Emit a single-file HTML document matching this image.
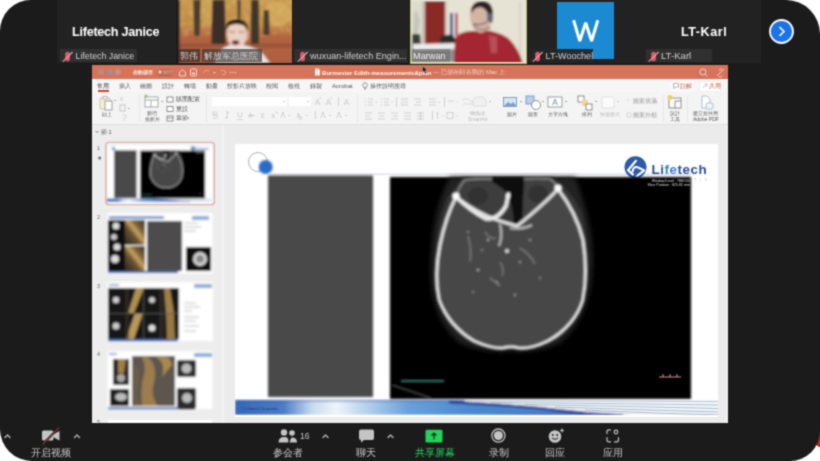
<!DOCTYPE html>
<html><head><meta charset="utf-8">
<style>
*{margin:0;padding:0;box-sizing:border-box}
html,body{width:820px;height:461px;overflow:hidden;background:#fff;font-family:"Liberation Sans",sans-serif}
.a{position:absolute}
#frame{position:absolute;left:0;top:0;width:820px;height:461px;background:#1b1b1b;border-radius:31px 34px 30px 32px;overflow:hidden;filter:url(#gblur)}
.tile{position:absolute;top:0;height:63px;background:#222;overflow:hidden}
.lbl{position:absolute;top:49px;height:13px;background:rgba(50,50,50,.9);color:#d0d0d0;font-size:9.5px;line-height:14.6px;white-space:nowrap}
.big{position:absolute;color:#fff;font-weight:bold;font-size:12.6px;white-space:nowrap}
.mic{position:absolute;left:1.5px;top:0.5px;width:12px;height:12px}
/* ppt */
#ppt{position:absolute;left:92px;top:65px;width:636px;height:358px;background:#f3f2f2;overflow:hidden}
#tb{position:absolute;left:0;top:0;width:636px;height:14px;background:#d5745a}
#tabs{position:absolute;left:0;top:14px;width:636px;height:13px;background:#f7f6f6}
#rib{position:absolute;left:0;top:27px;width:636px;height:33px;background:#f5f4f4;border-bottom:1px solid #e2e1e1}
.t{position:absolute;font-size:6px;color:#555;white-space:nowrap;line-height:7px}
.tg{position:absolute;font-size:5.5px;color:#bbb;white-space:nowrap;line-height:7px}
.sep{position:absolute;width:1px;background:#dedede}
/* toolbar */
.tl{position:absolute;top:447px;font-size:10px;color:#c8c8c8;white-space:nowrap;line-height:11px}
.car{position:absolute;top:432px;width:8px;height:6px}
</style></head><body><svg width="0" height="0" style="position:absolute"><filter id="gblur" x="0" y="0" width="100%" height="100%" color-interpolation-filters="sRGB"><feConvolveMatrix order="3" kernelMatrix="1 3 1 3 9 3 1 3 1" divisor="25" edgeMode="duplicate"/></filter></svg>
<div class="a" style="left:814px;top:429px;width:12px;height:18px;border-radius:50%;background:#c8262a"></div>
<div id="frame">
  <!-- tile 1 -->
  <div class="tile" style="left:57px;width:119px">
    <div class="big" style="left:15px;top:25px;letter-spacing:-.25px">Lifetech Janice</div>
    <div class="lbl" style="left:2.5px;width:77px"><svg class="mic" viewBox="0 0 12 12"><rect x="4.2" y="1.8" width="4.8" height="9.6" rx="2.4" fill="#d85a6a"/><path d="M1.8 11.6L11.6 2" stroke="#eaa4ac" stroke-width="1.1"/></svg><span style="position:absolute;left:16px;font-size:8.8px">Lifetech Janice</span></div>
  </div>
  <!-- tile 2 video -->
  <div class="tile" style="left:177.5px;width:114.5px;background:#b8743c">
    <svg class="a" style="left:0;top:0" width="115" height="63" viewBox="0 0 115 63">
      <defs>
        <linearGradient id="fg" x1="0" y1="0" x2="0" y2="1"><stop offset="0" stop-color="#c89a50"/><stop offset=".4" stop-color="#c08a46"/><stop offset=".58" stop-color="#b46a40"/><stop offset="1" stop-color="#a85a3c"/></linearGradient>
        <filter id="b1" x="-10%" y="-10%" width="120%" height="120%"><feGaussianBlur stdDeviation="1"/></filter>
        <filter id="b1n" x="0" y="0" width="100%" height="100%"><feTurbulence type="fractalNoise" baseFrequency=".18" numOctaves="2" seed="5"/><feColorMatrix values="0 0 0 0 .85  0 0 0 0 .68  0 0 0 0 .35  0 0 0 -2 1.1"/><feGaussianBlur stdDeviation=".8"/></filter>
      </defs>
      <rect width="115" height="63" fill="url(#fg)"/>
      <rect width="115" height="38" filter="url(#b1n)" opacity=".45"/>
      <g filter="url(#b1)">
        <ellipse cx="100" cy="14" rx="14" ry="12" fill="#dcb868" opacity=".55"/>
        <ellipse cx="30" cy="10" rx="8" ry="14" fill="#d4b060" opacity=".4"/>
        <rect x="0" y="36" width="115" height="27" fill="#b06040" opacity=".6"/>
        <rect x="0" y="43" width="115" height="5" fill="#8a4a36" opacity=".5"/>
        <rect x="-2" y="0" width="3.5" height="63" fill="#2a221e"/>
        <path d="M15.5 0h7l-1 36h-5z" fill="#4a3a2e"/>
        <path d="M34.5 0h12l1 44h-14z" fill="#3a2e28"/>
        <path d="M59.5 0h3l-.5 24h-2z" fill="#4a3a30"/>
        <path d="M73.5 0h7l.5 44h-8z" fill="#3a342a"/>
        <path d="M86 10h5l.5 25h-6z" fill="#4a3a2e"/>
        <path d="M37 63 Q40 48 52 45 L66 45 Q80 48 86 55 L92 63z" fill="#e6e4e2"/>
        <path d="M49 35 Q48 24 58.5 23.5 Q69 24 69 35 Q69 46 58.5 48 Q49 46 49 35z" fill="#ecd0c4"/>
        <path d="M47.5 31 Q47 20 58.5 20 Q70 20 70 31 L68.5 28 Q66 24 58.5 24 Q51 24 49 28z" fill="#161210"/>
        <rect x="68" y="31" width="2.5" height="9" rx="1.2" fill="#dcb4a4"/>
        <path d="M51 32h6M60.5 32h6" stroke="#7a6058" stroke-width=".9"/>
        <ellipse cx="57.5" cy="42.5" rx="3.8" ry="2.2" fill="#5a2a2a"/>
      </g>
    </svg>
    <div class="lbl" style="left:0;width:22px;background:rgba(50,42,38,.7);font-size:9px;padding-left:2.5px">郭伟</div>
    <div class="lbl" style="left:24.5px;width:59.5px;background:rgba(60,56,54,.7);font-size:9px;padding-left:2px">解放军总医院</div>
  </div>
  <!-- tile 3 -->
  <div class="tile" style="left:293px;width:116px">
    <div class="lbl" style="left:1px;width:113px"><svg class="mic" viewBox="0 0 12 12"><rect x="4.2" y="1.8" width="4.8" height="9.6" rx="2.4" fill="#d85a6a"/><path d="M1.8 11.6L11.6 2" stroke="#eaa4ac" stroke-width="1.1"/></svg><span style="position:absolute;left:16px;font-size:9.1px">wuxuan-lifetech Engin...</span></div>
  </div>
  <!-- tile 4 Marwan -->
  <div class="tile" style="left:410px;top:-1px;height:65px;width:117px;background:#e6e2d6;border:1px solid #b4c060">
    <svg class="a" style="left:0;top:1px" width="115" height="61" viewBox="0 0 115 61">
      <defs><filter id="b2"><feGaussianBlur stdDeviation="1"/></filter></defs>
      <g filter="url(#b2)">
        <rect x="-2" y="-2" width="119" height="65" fill="#e6e2d4"/>
        <rect x="0" y="0" width="12" height="61" fill="#dedcd0"/>
        <rect x="11" y="0" width="3" height="45" fill="#c8c0b0"/>
        <rect x="14" y="0" width="20" height="45" fill="#8a2a28"/>
        <rect x="34" y="0" width="2" height="45" fill="#d0c8b8"/>
        <rect x="108" y="0" width="2" height="61" fill="#d8d4c4"/>
        <path d="M3 12 L6 10 L9 20 L5 40 L2 38z" fill="#b8bcb0" opacity=".7"/>
        <rect x="39" y="12" width="3" height="23" fill="#3a4a8a"/>
        <rect x="42" y="12" width="3" height="23" fill="#e8e8e8"/>
        <rect x="44" y="12" width="2.5" height="23" fill="#b03030"/>
        <path d="M29 36 Q34 33 42 34 L46 42 L44 46 L29 46z" fill="#2a2a2a"/>
        <path d="M1 33 L9 33 L10 45 L1 45z" fill="#3a3a3a"/>
        <path d="M0 43 L46 43 L46 61 L0 61z" fill="#8e8e8e"/>
        <path d="M2 43 L44 42 L46 48 L2 49z" fill="#ececec"/>
        <path d="M43 63 L44 37 Q48 31 60 30 L80 30 Q92 33 98 38 Q108 48 112 63z" fill="#a42832"/>
        <path d="M78 34 L86 36 L86 52 L80 52z" fill="#c06068" opacity=".7"/>
        <path d="M59 15 Q59 1 70 .5 Q81 1 81 15 Q80 30 70 32 Q60 30 59 15z" fill="#d4b4a4"/>
        <path d="M64 22 Q70 32 78 24 L80 28 Q72 34 62 26z" fill="#a89088" opacity=".8"/>
        <path d="M60 10 Q61 0 71 0 Q82 0 82 14 L81 22 L77 20 Q78 8 70 6 Q63 6 61 12z" fill="#2a2420"/>
        <rect x="76" y="12" width="6" height="8" rx="3" fill="#5a6a7a"/>
        <path d="M77 20 Q72 25 62 23" stroke="#333" stroke-width="1" fill="none"/>
      </g>
    </svg>
    <div class="lbl" style="left:1px;top:49px;width:38px;background:rgba(100,100,100,.5);color:#f2f2f2;font-size:9.2px;padding-left:1px">Marwan</div>
  </div>
  <!-- tile 5 -->
  <div class="tile" style="left:527px;width:118px">
    <div class="a" style="left:30px;top:2px;width:57px;height:57px;background:#1b8ad3"></div>
    <svg class="a" style="left:30px;top:2px" width="57" height="57" viewBox="557 2 57 57"><path d="M573.6 20.2L579.8 41L585.7 22.8L591.6 41L597.8 20.2" fill="none" stroke="#fff" stroke-width="3" stroke-linejoin="miter" stroke-miterlimit="3"/></svg>
    <div class="lbl" style="left:2px;width:64px;background:rgba(38,38,38,.95)"><svg class="mic" viewBox="0 0 12 12"><rect x="4.2" y="1.8" width="4.8" height="9.6" rx="2.4" fill="#d85a6a"/><path d="M1.8 11.6L11.6 2" stroke="#eaa4ac" stroke-width="1.1"/></svg><span style="position:absolute;left:16.5px;font-size:9.1px">LT-Woochel</span></div>
  </div>
  <!-- tile 6 -->
  <div class="tile" style="left:645px;width:115.5px">
    <div class="big" style="left:36px;top:24.5px;letter-spacing:.55px">LT-Karl</div>
    <div class="lbl" style="left:0.5px;width:66px"><svg class="mic" viewBox="0 0 12 12"><rect x="4.2" y="1.8" width="4.8" height="9.6" rx="2.4" fill="#d85a6a"/><path d="M1.8 11.6L11.6 2" stroke="#eaa4ac" stroke-width="1.1"/></svg><span style="position:absolute;left:15.5px;font-size:9.6px">LT-Karl</span></div>
  </div>
  <!-- next arrow -->
  <svg class="a" style="left:769px;top:19px" width="25" height="25" viewBox="0 0 25 25">
    <circle cx="12.5" cy="12.5" r="11.5" fill="#1a73e8" stroke="#fff" stroke-width="1.8"/>
    <path d="M10.5 8L15 12.5L10.5 17" stroke="#fff" stroke-width="1.6" fill="none"/>
  </svg>

  <!-- PPT -->
  <div id="ppt">
    <div id="tb">
      <div class="a" style="left:6px;top:4px;width:6px;height:6px;border-radius:50%;background:#b98a80"></div>
      <div class="a" style="left:15px;top:4px;width:6px;height:6px;border-radius:50%;background:#a98a94"></div>
      <div class="a" style="left:23px;top:4px;width:6px;height:6px;border-radius:50%;background:#c49282"></div>
      <div class="t" style="left:41px;top:3.5px;color:#fbe8e0;font-weight:bold;font-size:4.8px">自動儲存</div>
      <div class="a" style="left:64.5px;top:3.5px;width:16.5px;height:7px;border-radius:4px;background:#b86450"></div>
      <div class="a" style="left:66px;top:5px;width:4px;height:4px;border-radius:50%;background:#e8b8a8"></div>
      <div class="t" style="left:71px;top:3.5px;color:#e0a898;font-size:4.5px">關閉</div>
      <svg class="a" style="left:86px;top:2px" width="60" height="11" viewBox="0 0 60 11">
        <path d="M1.5 5.5L4.5 2.5L7.5 5.5V9H1.5z" stroke="#f5d8cc" stroke-width="1" fill="none"/>
        <rect x="12.5" y="2" width="6" height="7" rx="1" stroke="#f5d8cc" stroke-width="1" fill="none"/>
        <rect x="14" y="5.5" width="3" height="2" fill="#f5d8cc"/>
        <path d="M25 6Q27 2 31 4" stroke="#e8a898" stroke-width="1" fill="none"/>
        <path d="M35 5l1.5 1.5L38 5" fill="#f5d8cc"/>
        <path d="M43 4Q46 2 48 5Q48 8 44 8" stroke="#e8a898" stroke-width="1" fill="none"/>
        <circle cx="55" cy="5.5" r=".7" fill="#f5d8cc"/><circle cx="57.5" cy="5.5" r=".7" fill="#f5d8cc"/><circle cx="52.5" cy="5.5" r=".7" fill="#f5d8cc"/>
      </svg>
      <svg class="a" style="left:222px;top:3px" width="7" height="8" viewBox="0 0 7 8"><path d="M1 .5h3.5L6 2v5.5H1z" fill="#fbe8e0"/></svg>
      <div class="t" style="left:230px;top:3.5px;color:#fff3ee;font-weight:bold;font-size:6.1px">Burmester Edith-measurements&amp;plan</div>
      <div class="t" style="left:341px;top:3.5px;color:#f6d0c4;font-size:6px">— 已儲存到 在我的 Mac 上</div>
      <svg class="a" style="left:606px;top:2px" width="30" height="11" viewBox="0 0 30 11">
        <circle cx="5" cy="5" r="3" stroke="#f5d0c4" stroke-width="1" fill="none"/><path d="M7.2 7.2L9.5 9.5" stroke="#f5d0c4" stroke-width="1"/>
        <path d="M19 9L26 2M21 3.5a2 2 0 0 1 3-1M24 8.5a2 2 0 0 1-3 1" stroke="#f5d0c4" stroke-width="1" fill="none"/>
      </svg>
    </div>
    <div id="tabs">
      <div class="t" style="left:5px;top:3.8px;color:#333;font-size:6px">常用</div>
      <div class="a" style="left:5.5px;top:11px;width:11px;height:1.5px;background:#c8462a"></div>
      <div class="t" style="left:27px;top:3.8px">插入</div>
      <div class="t" style="left:48px;top:3.8px">繪圖</div>
      <div class="t" style="left:70px;top:3.8px">設計</div>
      <div class="t" style="left:92px;top:3.8px">轉場</div>
      <div class="t" style="left:114px;top:3.8px">動畫</div>
      <div class="t" style="left:135px;top:3.8px">投影片放映</div>
      <div class="t" style="left:174px;top:3.8px">校閱</div>
      <div class="t" style="left:196px;top:3.8px">檢視</div>
      <div class="t" style="left:218px;top:3.8px">錄製</div>
      <div class="t" style="left:240px;top:3.8px;font-size:6px">Acrobat</div>
      <svg class="a" style="left:270px;top:2.5px" width="6" height="8" viewBox="0 0 6 8"><path d="M3 .8a2.2 2.2 0 0 1 1.3 4L4 6H2L1.7 4.8A2.2 2.2 0 0 1 3 .8zM2 7h2" stroke="#777" stroke-width=".8" fill="none"/></svg>
      <div class="t" style="left:278px;top:3.8px">操作說明搜尋</div>
      <div class="a" style="left:578px;top:2.5px;width:23px;height:10px;background:#fbfafa"></div>
      <svg class="a" style="left:581px;top:4px" width="6" height="6" viewBox="0 0 6 6"><path d="M.5.5h5v3.5H2.5L1 5.5V4H.5z" stroke="#999" stroke-width=".7" fill="none"/></svg>
      <div class="t" style="left:588px;top:3.8px;color:#c8553a;font-size:5.6px">註解</div>
      <div class="a" style="left:607px;top:2px;width:22px;height:11px;background:#fff;border:1px solid #eee"></div>
      <svg class="a" style="left:610px;top:4px" width="6" height="6" viewBox="0 0 6 6"><path d="M1 5L5 1M2.5 1H5V3.5" stroke="#aaa" stroke-width=".7" fill="none"/></svg>
      <div class="t" style="left:617px;top:3.8px;color:#c8553a;font-size:5.6px">共用</div>
    </div>
    <div id="rib">
      <svg class="a" style="left:0;top:0" width="636" height="32" viewBox="0 0 636 32">
        <g fill="none" stroke-width=".8">
        <!-- paste -->
        <rect x="8" y="6" width="10" height="11" rx="1" fill="#f2f0dc" stroke="#c0bc98"/>
        <rect x="11" y="4.5" width="4" height="2.5" fill="#fff" stroke="#aaa"/>
        <rect x="13" y="9" width="7" height="9" fill="#fff" stroke="#888"/>
        <path d="M22 8l1.2 1.2L24.4 8" fill="#888" stroke="none"/>
        <path d="M28 5l3 4M31 5l-3 4" stroke="#ccc"/>
        <rect x="28" y="13" width="5" height="6" stroke="#bbb"/>
        <path d="M35.5 16l1.2 1.2L38 16" fill="#999" stroke="none"/>
        <path d="M30 23h4v3h-2v3" stroke="#d4d4d4"/>
        <!-- new slide -->
        <rect x="53" y="5" width="13" height="10" fill="#fff" stroke="#8a9a9a"/>
        <path d="M53 8h13M59 8v7" stroke="#8a9a9a"/>
        <path d="M54 2v4M52 4h4" stroke="#8bb06a"/>
        <path d="M69 9l1.2 1.2L71.4 9" fill="#888" stroke="none"/>
        <rect x="75" y="5" width="6" height="5" fill="#fff" stroke="#777"/>
        <rect x="75" y="14.5" width="6" height="5" fill="#fff" stroke="#777"/>
        <rect x="75" y="24" width="6" height="5" fill="#fff" stroke="#777"/>
        <path d="M75 26h6" stroke="#777"/>
        <path d="M103 7.5l1.2 1.2L105.4 7.5" fill="#888" stroke="none"/>
        <path d="M95 25.5l1.2 1.2L97.4 25.5" fill="#888" stroke="none"/>
        <!-- separators -->
        <path d="M47.5 3v27M114.5 3v27M265.5 3v27M571.5 3v27M595.5 3v27" stroke="#e4e3e3"/>
        <!-- font boxes -->
        <rect x="120" y="5" width="75" height="9" fill="#fff" stroke="none"/>
        <rect x="197" y="5" width="22" height="9" fill="#fff" stroke="none"/>
        <path d="M191 9l1 1 1-1M215 9l1 1 1-1" stroke="#bbb"/>
        <g stroke="#c8c8c8">
        <path d="M223 13l2.5-6 2.5 6M224 11h3M227 6.5l1-1 1 1"/>
        <path d="M234 13l2.5-6 2.5 6M235 11h3M238 6.5l1-1 1 1"/>
        <path d="M246.5 5v9"/>
        <path d="M252 13l2.5-6 2.5 6M253 11h3"/>
        <path d="M121 20h2.5a1.5 1.5 0 0 1 0 3H121v-3zM121 23h3a1.5 1.5 0 0 1 0 3h-3" />
        <path d="M136 20l-1.5 6M134 20h3M133 26h3"/>
        <path d="M146 20v3a2 2 0 0 0 4 0v-3M145.5 27.5h5"/>
        <path d="M157 26l1.5-5 1.5 5M156 23.5h7"/>
        <path d="M169 21l3 5M172 21l-3 5"/>
        <path d="M180 22l2.5 4M182.5 22l-2.5 4M183.5 20h1.5v1.5"/>
        <path d="M189 26l2-6 2 6M196 23l1 1 1-1"/>
        <path d="M205 26l1.5-5 1.5 5M210 26a1.5 1.5 0 1 1 0-.1M213.5 23l1 1 1-1"/>
        <path d="M223.5 19v8"/>
        <path d="M229 26l2-6 2 6M237 23l1 1 1-1"/>
        <path d="M245 26l2-6 2 6M253 23l1 1 1-1"/>
        <!-- paragraph -->
        <path d="M273 7h1M276 7h5M273 10h1M276 10h5M273 13h1M276 13h5M283 9.5l1 1 1-1"/>
        <path d="M289 7h1M292 7h5M289 10h1M292 10h5M289 13h1M292 13h5M299 9.5l1 1 1-1"/>
        <path d="M304.5 5v10"/>
        <path d="M309 7h7M311 10h5M309 13h7M309 9l1.5 1.5L309 12"/>
        <path d="M322 7h7M324 10h5M322 13h7"/>
        <path d="M337 7h7M337 10h7M337 13h7M346 9.5l1 1 1-1"/>
        <path d="M352.5 5v10"/>
        <path d="M356 9h6M364 9.5l1 1 1-1"/>
        <path d="M370 8q4-3 8 1q3 2 6 0M371 12h10" stroke="#d4d4d4"/>
        <path d="M388 9.5l1 1 1-1"/>
        <path d="M273 21h7M273 24h5M273 27h7"/>
        <path d="M286 21h7M287 24h5M286 27h7"/>
        <path d="M299 21h7M301 24h5M299 27h7"/>
        <path d="M312 21h7M312 24h7M312 27h7"/>
        <path d="M325 21h7M325 24h7M325 27h7M328.5 20v8"/>
        <path d="M340.5 19v9"/>
        <path d="M344 21h3M345.5 21v6M350 23.5l1 1 1-1"/>
        <rect x="355" y="20.5" width="6" height="6"/><path d="M364 23.5l1 1 1-1"/>
        </g>
        <!-- SmartArt -->
        <path d="M381 8l3-3h7l3 3v6h-13z" stroke="#d8d8d8" fill="#f0f0f0"/>
        <path d="M397 9l1 1 1-1" stroke="#aaa"/>
        <!-- picture -->
        <rect x="411.5" y="5.5" width="13" height="9" fill="#d8e6f4" stroke="#6a8ab0"/>
        <path d="M412 14l4-4 3 2 2-2 3.5 4z" fill="#7aa2cc" stroke="none"/>
        <path d="M428 9l1 1 1-1" stroke="#888"/>
        <!-- shapes -->
        <rect x="434" y="4" width="8" height="8" fill="#b8d0ec" stroke="#6a8ab0"/>
        <circle cx="444" cy="13" r="4.5" fill="#fff" stroke="#777"/>
        <path d="M450 9l1 1 1-1" stroke="#888"/>
        <!-- text box -->
        <rect x="456" y="5" width="14" height="10" fill="#fff" stroke="#7a8a90"/>
        <path d="M460.5 13l2.5-6 2.5 6M461.5 11h3" stroke="#6a8ab0"/>
        <path d="M473 9l1 1 1-1" stroke="#888"/>
        <!-- arrange -->
        <rect x="486" y="4" width="6" height="6" fill="#fff" stroke="#777"/>
        <rect x="490" y="8" width="6" height="6" fill="#f2d890" stroke="none"/>
        <rect x="494" y="12" width="6" height="6" fill="#fff" stroke="#777"/>
        <path d="M503 9l1 1 1-1" stroke="#888"/>
        <!-- quick styles -->
        <path d="M510 5h10l2 2v9h-12z" fill="#fbfbfb" stroke="#dcdcdc"/>
        <path d="M525 9l1 1 1-1" stroke="#bbb"/>
        <path d="M535 7l2 2M535 21h4v4h-4z" stroke="#d0d0d0"/>
        <path d="M563 9l1 1 1-1M563 23l1 1 1-1" stroke="#bbb"/>
        <!-- designer -->
        <rect x="577" y="6" width="12" height="10" fill="#fbfbfb" stroke="#777"/>
        <path d="M583 9v7M583 9h6" stroke="#777"/>
        <circle cx="578" cy="5.5" r="2.5" fill="#f0d060" stroke="none"/>
        <!-- adobe pdf -->
        <path d="M610 4h5l3 3v9h-8z" fill="#fff" stroke="#9ab0c8"/>
        <rect x="614" y="11" width="7" height="6" rx="1.5" fill="#eef4fa" stroke="#9ab0c8"/>
        </g>
      </svg>
      <div class="t" style="left:10px;top:19px;font-size:5px">貼上</div>
      <div class="t" style="left:55px;top:18px;font-size:5px">新增</div>
      <div class="t" style="left:53px;top:24px;font-size:5px">投影片</div>
      <div class="t" style="left:84px;top:4px;font-size:5.5px">版面配置</div>
      <div class="t" style="left:84px;top:13.5px;font-size:5.5px">重設</div>
      <div class="t" style="left:84px;top:23px;font-size:5.5px">章節</div>
      <div class="tg" style="left:378px;top:18px;font-size:5px">轉換成</div>
      <div class="tg" style="left:376px;top:24px;font-size:5px">SmartArt</div>
      <div class="t" style="left:415px;top:19px;font-size:5px">圖片</div>
      <div class="t" style="left:436px;top:19px;font-size:5px">圖形</div>
      <div class="t" style="left:456px;top:19px;font-size:5px">文字方塊</div>
      <div class="t" style="left:490px;top:19px;font-size:5px">排列</div>
      <div class="tg" style="left:508px;top:19px;font-size:5px">快速樣式</div>
      <div class="tg" style="left:541px;top:5.5px;font-size:5.5px;color:#999">圖案填滿</div>
      <div class="tg" style="left:541px;top:19.5px;font-size:5.5px;color:#999">圖案外框</div>
      <div class="t" style="left:578px;top:18px;font-size:5px">設計</div>
      <div class="t" style="left:578px;top:24px;font-size:5px">工具</div>
      <div class="t" style="left:601px;top:18px;font-size:5px">建立並共用</div>
      <div class="t" style="left:601px;top:24px;font-size:5px">Adobe PDF</div>
    </div>
    <div id="thumbs" class="a" style="left:0;top:60px;width:130px;height:298px;background:#ededed">
      <svg class="a" style="left:0;top:0" width="130" height="298" viewBox="0 0 130 298">
        <defs>
          <filter id="tb1" x="-10%" y="-10%" width="120%" height="120%"><feGaussianBlur stdDeviation="1"/></filter>
          <linearGradient id="gold" x1="0" y1="1" x2="1" y2="0"><stop offset="0" stop-color="#2a2420"/><stop offset=".4" stop-color="#6a5434"/><stop offset=".55" stop-color="#c8a460"/><stop offset=".7" stop-color="#7a6038"/><stop offset="1" stop-color="#3a3028"/></linearGradient>
        </defs>
        <path d="M3.5 6l1.5 1.5L6.5 6" stroke="#666" stroke-width=".8" fill="none"/>
        <text x="9" y="9" font-size="5.5" fill="#555">節 1</text>
        <text x="5" y="25" font-size="5.5" fill="#666">1</text>
        <text x="4.5" y="35" font-size="6" fill="#666">★</text>
        <!-- thumb 1 -->
        <g filter="url(#tb1)">
          <rect x="16" y="20" width="104" height="59" fill="#fff"/>
          <g transform="translate(14.9,18.6) scale(.2153)"><use href="#slideg"/></g>
        </g>
        <rect x="13.8" y="17.2" width="108.6" height="62.6" rx="3" fill="none" stroke="#daa69a" stroke-width="1.1"/>
        <!-- thumb 2 -->
        <text x="5" y="94" font-size="5.5" fill="#666">2</text>
        <g filter="url(#tb1)">
          <rect x="15.5" y="88" width="105" height="60.5" fill="#fff"/>
          <rect x="17" y="91" width="55" height="3" fill="#7a9ad0"/>
          <rect x="100" y="91" width="17" height="4" fill="#8aaad8"/>
          <rect x="16" y="95" width="17" height="51" fill="#111"/>
          <circle cx="24" cy="101" r="3.5" fill="#ddd"/><circle cx="22" cy="112" r="3" fill="#ccc"/>
          <circle cx="25" cy="122" r="3.5" fill="#ddd"/><circle cx="23" cy="134" r="4" fill="#ddd"/>
          <rect x="33" y="95" width="20" height="25" fill="url(#gold)"/>
          <rect x="33" y="121" width="20" height="25" fill="url(#gold)"/>
          <rect x="55" y="96" width="35" height="50" fill="#4e4c4c"/>
          <path d="M92 98h14M92 102h17M92 106h12" stroke="#bbb" stroke-width="1"/>
          <rect x="94" y="122" width="25" height="24" fill="#111"/>
          <circle cx="108" cy="134" r="7" fill="#d8d8d8"/><circle cx="108" cy="134" r="4" fill="#888"/>
          <path d="M16 146h70v2H16z" fill="#4a6ab0"/>
        </g>
        <!-- thumb 3 -->
        <text x="5" y="163" font-size="5.5" fill="#666">3</text>
        <g filter="url(#tb1)">
          <rect x="15" y="157" width="106" height="59" fill="#fff"/>
          <rect x="17" y="159" width="10" height="2" fill="#8aaad8"/>
          <rect x="102" y="159" width="18" height="4" fill="#8aaad8"/>
          <rect x="16" y="163" width="71" height="51" fill="#161616"/>
          <path d="M36 188L44 163L52 163L42 188z" fill="#b09050"/>
          <path d="M34 214L43 188L51 188L42 214z" fill="#b89858"/>
          <path d="M72 163h6l4 25h-8z" fill="#a08048"/><path d="M74 188h8l1 26h-8z" fill="#987844"/>
          <rect x="33" y="163" width="4" height="51" fill="#3a3028" opacity=".6"/>
          <rect x="67" y="163" width="5" height="51" fill="#3a3028" opacity=".6"/>
          <circle cx="24" cy="175" r="3.2" fill="#d0d0d0"/><circle cx="60" cy="175" r="3" fill="#ccc"/>
          <circle cx="24" cy="201" r="3.5" fill="#ccc"/><circle cx="60" cy="203" r="3.5" fill="#ddd"/>
          <path d="M16 188.5h71M51.5 163v51" stroke="#555" stroke-width=".8"/>
          <path d="M92 178h12M92 182h16M92 186h8M92 192h15M92 196h12M92 201h15M92 206h12" stroke="#bbb" stroke-width="1"/>
          <path d="M16 214h70v2H16z" fill="#4a6ab0"/>
        </g>
        <!-- thumb 4 -->
        <text x="5" y="231" font-size="5.5" fill="#666">4</text>
        <g filter="url(#tb1)">
          <rect x="15.5" y="226" width="105" height="58" fill="#fff"/>
          <rect x="17" y="228" width="8" height="2" fill="#8aaad8"/>
          <rect x="102" y="228" width="18" height="4" fill="#8aaad8"/>
          <rect x="21" y="234" width="16" height="26" fill="#2a2420"/>
          <path d="M26 234h8l-2 14h-6z" fill="#a08048"/>
          <circle cx="29" cy="253" r="4" fill="#aaa"/>
          <rect x="18" y="264" width="19" height="17" fill="#1e1e1e"/>
          <ellipse cx="29" cy="272" rx="6" ry="4" fill="#bbb"/>
          <rect x="40" y="231" width="43" height="50" fill="#5c5650"/>
          <path d="M56 232Q66 240 62 258Q58 270 66 281H50Q48 262 52 250Q54 240 50 232z" fill="#a8844c" opacity=".85"/><path d="M44 240Q50 250 46 262Q44 272 48 281H42V240z" fill="#7a6040" opacity=".6"/>
          <path d="M64 232Q74 238 70 252L80 240Q78 232 74 232z" fill="#b8904c" opacity=".85"/>
          <rect x="85" y="235" width="19" height="17" rx="2" fill="#2a2a2a"/>
          <circle cx="94.5" cy="243.5" r="5" fill="#bbb"/>
          <rect x="85" y="263" width="19" height="21" rx="2" fill="#2a2a2a"/>
          <circle cx="95" cy="273" r="5" fill="#bbb"/>
          <path d="M16 282h70v2H16z" fill="#4a6ab0"/>
        </g>
        <text x="5" y="299" font-size="5.5" fill="#666">5</text>
        <rect x="16" y="295" width="104" height="5" fill="#fff"/>
      </svg>
    </div>
    <div class="a" style="left:130px;top:60px;width:2px;height:298px;background:#f3f3f3"></div>
    <div id="edit" class="a" style="left:132px;top:60px;width:504px;height:298px;background:#ebebeb"></div>
    <div class="a" style="left:634px;top:60px;width:2px;height:298px;background:#f2f2f2"></div>
    <div id="slide" class="a" style="left:143px;top:79px;width:483px;height:273px;background:#fff;overflow:hidden">
      <svg class="a" style="left:0;top:0" width="483" height="273" viewBox="0 0 483 273"><g id="slideg">
        <defs>
          <filter id="sb" x="-5%" y="-5%" width="110%" height="110%"><feGaussianBlur stdDeviation=".8"/></filter>
          <filter id="sk" x="-20%" y="-20%" width="140%" height="140%"><feGaussianBlur stdDeviation="1.2"/></filter>
          <filter id="sk2" x="-50%" y="-50%" width="200%" height="200%"><feGaussianBlur stdDeviation="2.5"/></filter>
          <linearGradient id="band" x1="0" y1="0" x2="0" y2="1"><stop offset="0" stop-color="#1c3a9a"/><stop offset=".25" stop-color="#3a6ac0"/><stop offset=".6" stop-color="#5a9ad8"/><stop offset="1" stop-color="#3a7ac8"/></linearGradient>
          <radialGradient id="glow" cx=".5" cy=".5" r=".5"><stop offset="0" stop-color="#fff" stop-opacity="1"/><stop offset=".6" stop-color="#fff" stop-opacity=".7"/><stop offset="1" stop-color="#fff" stop-opacity="0"/></radialGradient>
        </defs>
        <!-- circle decoration -->
        <circle cx="23" cy="18" r="9.5" fill="none" stroke="#9a9a9a" stroke-width=".8"/>
        <circle cx="30.7" cy="23" r="7" fill="#2a6ac8" filter="url(#sb)"/>
        <rect x="33" y="29.5" width="423" height="1.2" fill="#d6dbe6"/>
        <!-- gray panel -->
        <rect x="33" y="31.5" width="105" height="221.5" fill="#4a4849" filter="url(#sb)"/>
        <g transform="translate(-235,-144)"><circle cx="635.5" cy="167.3" r="11" fill="#2c5aa6"/>
        <path d="M636 160.8L628 170.2L633 174.6M632.6 171.4Q633.2 166.2 637.6 167.2L644.2 170.4L636.6 176.4" fill="none" stroke="#fff" stroke-width="2.1" stroke-linejoin="round" stroke-linecap="round"/></g>
        <!-- CT black -->
        <rect x="155" y="33" width="301" height="222" fill="#000" filter="url(#sb)"/>
        <g transform="translate(-235,-144)">
        <g filter="url(#sk2)">
          <path d="M450 177 L575 177 Q596 230 592 275 Q588 320 560 343 Q535 354 511 351 Q485 354 460 343 Q432 320 431 275 Q430 215 450 177z" fill="#242424"/>
        </g>
        <g filter="url(#sk)">
          <path d="M463 177 L552 177 Q574 192 582 214 Q590 250 588 280 Q584 316 558 338 Q535 352 511 348 Q485 352 464 338 Q436 316 434 280 Q434 230 448 197z" fill="#363636"/>
          <path d="M456 197 Q446 216 440 245 Q434 275 439 300 Q449 326 474 341 Q494 350 504 348 Q511 346 518 348 Q530 350 548 341 Q575 326 583 300 Q588 272 583 240 Q576 212 558 189 Q544 204 517 226 L500 221 Q478 214 456 197z" fill="#474747" stroke="#e2e2e2" stroke-width="3"/>
          <path d="M462 179 L494 179 L507 194 L507 206 L499 218 Q478 211 458 196z" fill="#3e3e3e"/>
          <path d="M524 179 L552 179 L557 189 Q544 204 520 224 L522 214z" fill="#404040"/>
          <ellipse cx="478" cy="196" rx="10" ry="9" fill="#303030"/>
          <ellipse cx="538" cy="194" rx="10" ry="9" fill="#323232"/>
          <path d="M456 197 Q459 186 465 180 Q480 178 494 179M558 189 Q556 183 550 179 Q538 178 524 179" fill="none" stroke="#8c8c8c" stroke-width="1.6"/>
          <path d="M492 177 L524 177 L522 224 L514 224 Q513 206 508 194 Q501 186 492 182z" fill="#0a0a0a"/>
          <path d="M456 197 Q472 212 486 219 Q498 220 506 206 L508.5 194" fill="none" stroke="#ebebeb" stroke-width="3.6" stroke-linecap="round"/>
          <path d="M558 189 Q544 204 517 226" fill="none" stroke="#dedede" stroke-width="3"/>
          <path d="M500 224 Q503 236 499 246" fill="none" stroke="#b8b8b8" stroke-width="2.2"/>
          <path d="M510 228 Q522 230 532 225" fill="none" stroke="#c0c0c0" stroke-width="2"/>
          <circle cx="456" cy="196" r="3.6" fill="#fff"/>
          <circle cx="558" cy="188" r="3.6" fill="#fff"/>
          <circle cx="508" cy="196" r="2.4" fill="#f4f4f4"/>
          <circle cx="507" cy="251" r="2" fill="#e0e0e0"/>
          <circle cx="478" cy="270" r="1.3" fill="#aaa"/><circle cx="520" cy="262" r="1.1" fill="#aaa"/>
          <circle cx="497" cy="282" r="1.1" fill="#999"/><circle cx="515" cy="295" r="1.2" fill="#999"/>
          <circle cx="473" cy="292" r="1" fill="#999"/><circle cx="540" cy="278" r="1" fill="#999"/>
          <circle cx="488" cy="240" r="1.2" fill="#aaa"/><circle cx="530" cy="240" r="1.1" fill="#aaa"/>
          <circle cx="482" cy="250" r="1" fill="#999"/><circle cx="468" cy="232" r="1.1" fill="#999"/>
          <path d="M520 248 Q530 254 535 264M490 278 Q496 282 500 286M468 236 Q472 250 470 262M485 232 Q490 240 496 238M500 262 Q505 270 502 276" fill="none" stroke="#8a8a8a" stroke-width="1.1"/>
        </g>
        </g>
        <text x="455" y="37.5" font-size="3.6" fill="#ddd" text-anchor="end">Window/Level : 788/150</text>
        <text x="455" y="41.5" font-size="3.6" fill="#ddd" text-anchor="end">Slice Position : 825.82 mm</text>
        <rect x="166" y="235.5" width="43" height="3" fill="#2a6856" filter="url(#sb)"/>
        <path d="M157 241 L196 254" stroke="#777" stroke-width="1.2" filter="url(#sb)"/>
        <path d="M424 233h22M428 233v-3M435 233v-3M442 233v-3" stroke="#e8a898" stroke-width=".9"/>
        <!-- logo -->
        <text x="416.5" y="30.4" font-size="13.4" font-weight="bold" fill="#2c4c94" style="letter-spacing:.55px">L<tspan fill="#2c5aa6">i</tspan><tspan fill="#3d80cc">fe</tspan>tech</text>
        <text x="459" y="37" font-size="3.2" fill="#9ab" style="letter-spacing:4px">TIC</text>
        <!-- band -->
        <defs>
          <linearGradient id="bandh" x1="0" y1="0" x2="483" y2="0" gradientUnits="userSpaceOnUse">
            <stop offset="0" stop-color="#3568b8"/><stop offset=".1" stop-color="#4a7cc4"/>
            <stop offset=".16" stop-color="#c8dcf0"/><stop offset=".21" stop-color="#eef4fa"/><stop offset=".27" stop-color="#b8d2ec"/>
            <stop offset=".36" stop-color="#6aa0d8"/><stop offset=".5" stop-color="#4a88cc"/><stop offset=".7" stop-color="#4a80c8"/><stop offset="1" stop-color="#8ab0dc"/>
          </linearGradient>
        </defs>
        <g filter="url(#sb)">
          <path d="M0 256 L483 256 L483 271 L0 271z" fill="url(#bandh)"/>
          <path d="M212 256.6 Q290 261 325 265.5 Q355 269 388 271 L483 271 L483 256 L212 256z" fill="#f2f6fa"/>
          <path d="M0 256.6 L230 256.6" stroke="#2a48a0" stroke-width="1.4" opacity=".8"/>
          <path d="M214 258 Q290 262 325 266.5 Q355 270 388 271.5" fill="none" stroke="#1a2c8c" stroke-width="2.6"/>
          <path d="M250 271 Q320 268 400 271z" fill="#2a4aa8"/>
          </g>
        <g fill="none" stroke-width=".8">
          <path d="M230 257 Q360 257 483 257.5" stroke="#a8b8cc"/>
          <path d="M255 258.5 Q380 259.5 483 261" stroke="#9cb0c8"/>
          <path d="M290 260.5 Q400 262.5 483 264.5" stroke="#98acc4"/>
          <path d="M320 263 Q410 266 483 268" stroke="#94a8c2"/>
          <path d="M350 266 Q420 269.5 483 270.8" stroke="#90a4c0"/>
        </g>
        <rect x="0" y="271" width="483" height="3" fill="#fff"/>
        <text x="6" y="266" font-size="4.2" fill="#1a2a5a" opacity=".8">© Lifetech Scientific</text>
      </g></svg>
    </div>
  </div>

  <svg class="a" style="left:421px;top:64.5px" width="8" height="9" viewBox="0 0 8 9"><path d="M1.5 1L1.5 7.5L3 6L4.5 8.5L5.5 8L4.2 5.5L6.5 5.5z" fill="#111" stroke="#bbb" stroke-width=".5"/></svg>
  <!-- toolbar -->
  <svg class="a" style="left:0;top:423px" width="820" height="38" viewBox="0 423 820 38">
    <g fill="none" stroke="#b8b8b8" stroke-width="1.3" stroke-linecap="round" stroke-linejoin="round">
      <path d="M5 437.5l2.5-2.5 2.5 2.5"/>
      <path d="M74.5 437.5l2.5-2.5 2.5 2.5"/>
      <path d="M323 437.5l2.5-2.5 2.5 2.5"/>
      <path d="M388 437.5l2.5-2.5 2.5 2.5"/>
    </g>
    <!-- video -->
    <rect x="42" y="430.5" width="11.5" height="10" rx="1.5" fill="#c4c4c4"/>
    <path d="M53 434.5L59.5 431V440.5L53 437z" fill="#c4c4c4"/>
    <path d="M42.5 444.5L59 427.5" stroke="#1b1b1b" stroke-width="2.2"/>
    <path d="M42.5 444.5L59 427.5" stroke="#d04050" stroke-width="1"/>
    <!-- participants -->
    <circle cx="284" cy="432.5" r="3.2" fill="#c4c4c4"/>
    <path d="M278.5 442.5Q278.5 437 284 437Q289.5 437 289.5 442.5z" fill="#c4c4c4"/>
    <circle cx="292" cy="433" r="2.8" fill="#c4c4c4"/>
    <path d="M290 442.5Q290.5 437.5 292 437.5Q297 437.5 297 442.5z" fill="#c4c4c4"/>
    <path d="M288.8 443V437.2" stroke="#1b1b1b" stroke-width="1"/>
    <!-- chat -->
    <path d="M361 429.5h11a2 2 0 0 1 2 2v6.5a2 2 0 0 1-2 2h-8l-3 2.5v-2.5h0a2 2 0 0 1-2-2v-6.5a2 2 0 0 1 2-2z" fill="#c4c4c4"/>
    <!-- share -->
    <rect x="425.5" y="429.8" width="17" height="12.6" rx="1.5" fill="#23d35a"/>
    <path d="M434 439.5V433M431.5 435.5L434 433L436.5 435.5" stroke="#0a2a10" stroke-width="1.2" fill="none"/>
    <!-- record -->
    <circle cx="498.4" cy="435.6" r="6.6" fill="none" stroke="#c4c4c4" stroke-width="1.3"/>
    <circle cx="498.4" cy="435.6" r="4.6" fill="#c4c4c4"/>
    <!-- reactions -->
    <circle cx="555" cy="436.5" r="6.3" fill="#c4c4c4"/>
    <circle cx="552.8" cy="435" r=".9" fill="#1b1b1b"/><circle cx="557.2" cy="435" r=".9" fill="#1b1b1b"/>
    <path d="M552 438Q555 441 558 438" stroke="#1b1b1b" stroke-width="1" fill="none"/>
    <path d="M562 428.5v4M560 430.5h4" stroke="#c4c4c4" stroke-width="1.1"/>
    <!-- apps -->
    <g fill="none" stroke="#c4c4c4" stroke-width="1.2" stroke-linecap="round">
      <path d="M607 433.5V431.5Q607 429.8 609 429.8H610.5"/>
      <path d="M607 437.5V440Q607 441.8 609 441.8H610.5"/>
      <path d="M614.5 441.8H616.5Q618.5 441.8 618.5 440V437.5"/>
      <circle cx="616" cy="432" r="1.8"/>
    </g>
  </svg>
  <div class="tl" style="left:31px;top:447px">开启视频</div>
  <div class="tl" style="left:300px;top:430.5px;font-size:8.5px">16</div>
  <div class="tl" style="left:273px;top:447px">参会者</div>
  <div class="tl" style="left:356px;top:447px">聊天</div>
  <div class="tl" style="left:414.5px;top:447px;color:#27d35c">共享屏幕</div>
  <div class="tl" style="left:488.5px;top:447px">录制</div>
  <div class="tl" style="left:545px;top:447px">回应</div>
  <div class="tl" style="left:602.5px;top:447px">应用</div>
</div>
</body></html>
